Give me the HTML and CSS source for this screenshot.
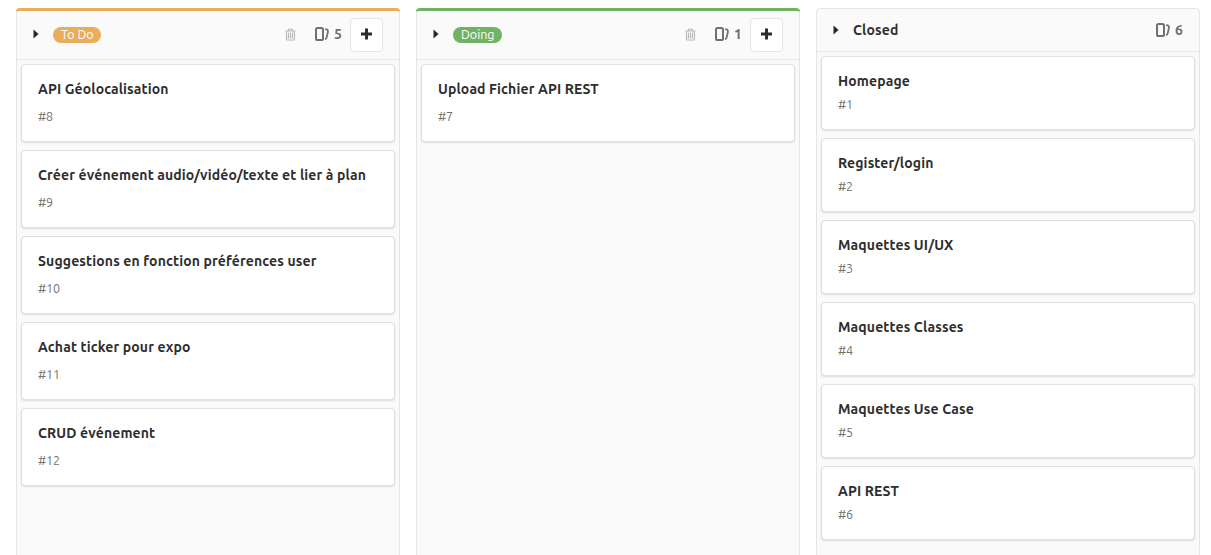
FILE: index.html
```
<!DOCTYPE html>
<html lang="fr">
<head>
<meta charset="utf-8">
<title>Board</title>
<link rel="stylesheet" href="styles.css">
</head>
<body>
<svg class="sprite" aria-hidden="true">
  <symbol id="caret" viewBox="0 0 6 10"><path d="M.5 .5 5.6 5 .5 9.5z" fill="#1f2937"/></symbol>
  <symbol id="trash" viewBox="0 0 12 13"><path d="M.5 3h10M3.5 2.7V1.2h4v1.5M1.5 3.5V11q0 1 1 1h6q1 0 1-1V3.5M3.5 4.5v6M5.5 4.5v6M7.5 4.5v6" fill="none" stroke="#b8b8b8" stroke-width="1.15"/></symbol>
  <symbol id="cards" viewBox="0 0 14 14"><rect x="1" y="1" width="7" height="12" rx="1.6" fill="none" stroke="#707070" stroke-width="2"/><path d="M10.1 2.1C12.6 2.2 13.2 3.4 12.8 5.3L11.9 9.6C11.6 11.1 11 11.9 10 12.1" fill="none" stroke="#707070" stroke-width="1.8"/></symbol>
  <symbol id="plus" viewBox="0 0 12 12"><path d="M4 .5h3v4h4v3H7v4H4v-4H0v-3h4z" fill="#2e2e2e"/></symbol>
</svg>
<main class="board">
  <section class="column todo">
    <header class="head">
      <svg class="caret"><use href="#caret"/></svg>
      <span class="label label-todo">To Do</span>
      <svg class="trash"><use href="#trash"/></svg>
      <span class="count"><svg class="cards"><use href="#cards"/></svg>5</span>
      <button class="add" aria-label="Add"><svg class="plus"><use href="#plus"/></svg></button>
    </header>
    <div class="list">
      <article class="card"><h4 class="title">API Géolocalisation</h4><span class="number">#8</span></article>
      <article class="card"><h4 class="title">Créer événement audio/vidéo/texte et lier à plan</h4><span class="number">#9</span></article>
      <article class="card"><h4 class="title">Suggestions en fonction préférences user</h4><span class="number">#10</span></article>
      <article class="card"><h4 class="title">Achat ticker pour expo</h4><span class="number">#11</span></article>
      <article class="card"><h4 class="title">CRUD événement</h4><span class="number">#12</span></article>
    </div>
  </section>
  <section class="column doing">
    <header class="head">
      <svg class="caret"><use href="#caret"/></svg>
      <span class="label label-doing">Doing</span>
      <svg class="trash"><use href="#trash"/></svg>
      <span class="count"><svg class="cards"><use href="#cards"/></svg>1</span>
      <button class="add" aria-label="Add"><svg class="plus"><use href="#plus"/></svg></button>
    </header>
    <div class="list">
      <article class="card"><h4 class="title">Upload Fichier API REST</h4><span class="number">#7</span></article>
    </div>
  </section>
  <section class="column closed">
    <header class="head">
      <svg class="caret"><use href="#caret"/></svg>
      <h3 class="name">Closed</h3>
      <span class="count"><svg class="cards"><use href="#cards"/></svg>6</span>
    </header>
    <div class="list">
      <article class="card"><h4 class="title">Homepage</h4><span class="number">#1</span></article>
      <article class="card"><h4 class="title">Register/login</h4><span class="number">#2</span></article>
      <article class="card"><h4 class="title">Maquettes UI/UX</h4><span class="number">#3</span></article>
      <article class="card"><h4 class="title">Maquettes Classes</h4><span class="number">#4</span></article>
      <article class="card"><h4 class="title">Maquettes Use Case</h4><span class="number">#5</span></article>
      <article class="card"><h4 class="title">API REST</h4><span class="number">#6</span></article>
    </div>
  </section>
</main>
</body>
</html>
```
FILE: styles.css
```
* { box-sizing: border-box; }
body { margin: 0; height: 555px; overflow: hidden; background: #fff; color: #2e2e2e; font: 14px/16px Ubuntu, "Noto Sans", sans-serif; }
svg { display: block; flex: none; }
h3, h4 { margin: 0; font-size: 14px; font-weight: 700; letter-spacing: .13px; }
.sprite { position: absolute; width: 0; height: 0; }
.board { display: flex; gap: 16px; height: 571px; padding: 8px 0 0 16px; }
.column { flex: none; width: 384px; background: #fafafa; border: 1px solid #e5e5e5; border-radius: 4px; }
.head { display: flex; align-items: center; height: 43px; padding: 0 16px; border-bottom: 1px solid #e5e5e5; }
.todo .head, .doing .head { height: 52px; margin: -1px -1px 0; padding: 0 17px; border-top: 3px solid #e9ad5b; border-radius: 4px 4px 0 0; }
.doing .head { border-top-color: #70b362; }
.caret { width: 6px; height: 10px; margin: 0 14px 2px 0; }
.closed .caret { margin-bottom: 0; }
.label { height: 16px; padding: 0 8px; border-radius: 8px; color: #fff; font-size: 12.5px; line-height: 15px; white-space: nowrap; }
.label-todo { width: 48px; background: #e9ad5b; }
.label-doing { width: 49px; background: #70b362; }
.trash { width: 12px; height: 13px; margin: 0 0 2px auto; }
.count { display: flex; align-items: center; margin: 0 0 2px 18px; color: #707070; font-size: 14px; font-weight: 700; }
.cards { width: 14px; height: 14px; margin-right: 5px; }
.closed .count { margin: 0 0 0 auto; }
.add { display: grid; place-items: center; width: 33px; height: 34px; margin-left: 8px; padding: 0 0 2px; background: #fff; border: 1px solid #e5e5e5; border-radius: 4px; }
.plus { width: 12px; height: 12px; }
.name { margin-left: 0; }
.list { display: grid; gap: 8px; padding: 4px; }
.card { height: 78px; padding: 16px; background: #fff; border: 1px solid #dfdfdf; border-radius: 4px; box-shadow: 0 1px 2px rgba(0, 0, 0, .12); }
.closed .card { height: 74px; }
.title { line-height: 16px; white-space: nowrap; }
.number { display: block; margin-top: 12px; color: #707070; font-size: 12.5px; line-height: 15px; letter-spacing: -.15px; }
.closed .number { margin-top: 8px; }
```
